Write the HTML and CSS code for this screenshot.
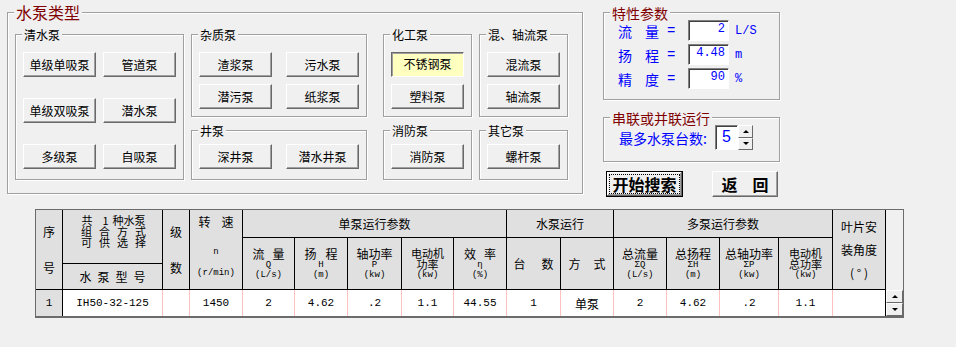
FILE: index.html
```html
<!DOCTYPE html>
<html lang="zh-CN">
<head>
    <meta charset="UTF-8">
    <title>水泵选型</title>
    <link rel="stylesheet" href="styles.css">
</head>
<body>

    <div class="top">
        <!-- 水泵类型 -->
        <div class="group main">
            <div class="title">水泵类型</div>
            <div class="cols">
                <div class="group g-clear">
                    <div class="title">清水泵</div>
                    <div class="btns two wide-rows">
                        <button>单级单吸泵</button>
                        <button>管道泵</button>
                        <button>单级双吸泵</button>
                        <button>潜水泵</button>
                        <button>多级泵</button>
                        <button>自吸泵</button>
                    </div>
                </div>

                <div class="col">
                    <div class="group g-big">
                        <div class="title">杂质泵</div>
                        <div class="btns two far">
                            <button>渣浆泵</button>
                            <button>污水泵</button>
                            <button>潜污泵</button>
                            <button>纸浆泵</button>
                        </div>
                    </div>
                    <div class="group g-big g-low">
                        <div class="title">井泵</div>
                        <div class="btns two far">
                            <button>深井泵</button>
                            <button>潜水井泵</button>
                        </div>
                    </div>
                </div>

                <div class="col col-gap">
                    <div class="group g-small">
                        <div class="title">化工泵</div>
                        <div class="btns">
                            <button class="on">不锈钢泵</button>
                            <button>塑料泵</button>
                        </div>
                    </div>
                    <div class="group g-small g-low">
                        <div class="title">消防泵</div>
                        <div class="btns">
                            <button>消防泵</button>
                        </div>
                    </div>
                </div>

                <div class="col">
                    <div class="group g-small">
                        <div class="title">混、轴流泵</div>
                        <div class="btns">
                            <button>混流泵</button>
                            <button>轴流泵</button>
                        </div>
                    </div>
                    <div class="group g-small g-low">
                        <div class="title">其它泵</div>
                        <div class="btns">
                            <button>螺杆泵</button>
                        </div>
                    </div>
                </div>
            </div>
        </div>

        <!-- 右侧参数 -->
        <div class="side">
            <div class="group params">
                <div class="title">特性参数</div>
                <div class="row">
                    <span class="lbl">流量</span><span class="eq">=</span>
                    <span class="field">2</span><span class="unit">L/S</span>
                </div>
                <div class="row">
                    <span class="lbl">扬程</span><span class="eq">=</span>
                    <span class="field">4.48</span><span class="unit">m</span>
                </div>
                <div class="row">
                    <span class="lbl">精度</span><span class="eq">=</span>
                    <span class="field">90</span><span class="unit">%</span>
                </div>
            </div>

            <div class="group series">
                <div class="title">串联或并联运行</div>
                <div class="spin-row">
                    <span class="spin-lbl">最多水泵台数:</span>
                    <span class="spin-box">5</span>
                    <span class="spin-btns">
                        <span class="arrow up"></span>
                        <span class="arrow down"></span>
                    </span>
                </div>
            </div>

            <div class="actions">
                <button class="act default"><span>开始搜索</span></button>
                <button class="act back"><span>返</span><span class="sp">回</span></button>
            </div>
        </div>
    </div>

    <!-- 结果表格 -->
    <div class="grid">
        <div class="h rs3 two-line"><span>序</span><span>号</span></div>
        <div class="h rs2 combo"><span>共<i class="num">1</i>种水泵</span><span class="sp6">组合方式</span><span class="sp6">可供选择</span></div>
        <div class="h rs3 two-line"><span>级</span><span>数</span></div>
        <div class="h rs3 speed"><span class="cn sp11">转速</span><span class="en l2">n</span><span class="en l3">(r/min)</span></div>
        <div class="h cs5"><span class="cn">单泵运行参数</span></div>
        <div class="h cs2"><span class="cn">水泵运行</span></div>
        <div class="h cs4"><span class="cn">多泵运行参数</span></div>
        <div class="h rs3 blade"><span>叶片安</span><span>装角度</span><span>( ° )</span></div>
        <div class="blank rs3"></div>

        <div class="h rs2"><span class="cn sp8">流量</span><span class="en">Q</span><span class="en">(L/s)</span></div>
        <div class="h rs2"><span class="cn sp9">扬程</span><span class="en">H</span><span class="en">(m)</span></div>
        <div class="h rs2"><span class="cn">轴功率</span><span class="en">P</span><span class="en">(kw)</span></div>
        <div class="h rs2"><span class="cn tight">电动机</span><span class="cn tight">功率</span><span class="en">(kw)</span></div>
        <div class="h rs2"><span class="cn sp8">效率</span><span class="en">η</span><span class="en">(%)</span></div>
        <div class="h rs2"><span class="cn sp16">台数</span></div>
        <div class="h rs2"><span class="cn sp13">方式</span></div>
        <div class="h rs2"><span class="cn">总流量</span><span class="en">ΣQ</span><span class="en">(L/s)</span></div>
        <div class="h rs2"><span class="cn">总扬程</span><span class="en">ΣH</span><span class="en">(m)</span></div>
        <div class="h rs2"><span class="cn">总轴功率</span><span class="en">ΣP</span><span class="en">(kw)</span></div>
        <div class="h rs2"><span class="cn tight">电动机</span><span class="cn tight">总功率</span><span class="en">(kw)</span></div>
        <div class="h model"><span class="cn sp6">水泵型号</span></div>

        <div class="d idx">1</div>
        <div class="d">IH50-32-125</div>
        <div class="d"></div>
        <div class="d">1450</div>
        <div class="d">2</div>
        <div class="d">4.62</div>
        <div class="d">.2</div>
        <div class="d">1.1</div>
        <div class="d">44.55</div>
        <div class="d">1</div>
        <div class="d cn-cell">单泵</div>
        <div class="d">2</div>
        <div class="d">4.62</div>
        <div class="d">.2</div>
        <div class="d">1.1</div>
        <div class="d last"></div>
        <div class="scroll">
            <span class="arrow up"></span>
            <span class="arrow down"></span>
        </div>
    </div>

</body>
</html>
```

FILE: styles.css
```css
/* 基本 */
body {
    margin: 0;
    background-color: #f0f0f0;
    color: #000;
    font: 12px "Noto Sans CJK SC", sans-serif;
}

button {
    font: 12px "Noto Sans CJK SC", sans-serif;
    color: #000;
    padding: 0;
}

.top {
    display: flex;
    align-items: flex-start;
    padding: 12px 0 0 7px;
}

/* 分组框 */
.group {
    box-sizing: border-box;
    border: 1px solid #a0a0a0;
    box-shadow: 1px 1px 0 #fff, inset 1px 1px 0 #fff;
}

.title {
    width: max-content;
    height: 14px;
    line-height: 14px;
    margin: -7px 0 0 6px;
    padding: 0 2px;
    background-color: #f0f0f0;
}

.main {
    width: 576px;
    height: 182px;
}

.main > .title {
    height: 18px;
    line-height: 18px;
    margin-top: -10px;
    font-size: 16px;
    color: #800000;
}

.cols {
    display: flex;
    gap: 7px;
    margin-top: 13px;
    padding-left: 7px;
}

.col {
    display: flex;
    flex-direction: column;
    gap: 13px;
}

.col-gap {
    margin-left: 9px;
}

.g-clear {
    width: 169px;
    height: 146px;
}

.g-big {
    width: 176px;
    height: 83px;
}

.g-small {
    width: 89px;
    height: 83px;
}

.g-low {
    height: 50px;
}

/* 按钮 */
.btns {
    display: grid;
    grid-template-columns: 73px;
    grid-auto-rows: 25px;
    row-gap: 7px;
    margin-top: 10px;
    padding-left: 7px;
}

.g-low .btns {
    margin-top: 6px;
}

.btns.two {
    grid-template-columns: 73px 73px;
    column-gap: 7px;
}

.btns.far {
    column-gap: 14px;
}

.btns.wide-rows {
    row-gap: 21px;
}

.btns button {
    background-color: #f0f0f0;
    border: 1px solid;
    border-color: #fff #696969 #696969 #fff;
    box-shadow: inset -1px -1px 0 #a0a0a0;
    line-height: 22px;
}

.btns button.on {
    background-color: #ffffc0;
    border-color: #696969 #fff #fff #696969;
    box-shadow: inset 1px 1px 0 #a0a0a0;
    padding-bottom: 4px;
}

/* 右侧 */
.side {
    width: 177px;
    margin-left: 20px;
    display: flex;
    flex-direction: column;
}

.side .title {
    font-size: 14px;
    color: #800000;
}

.params {
    height: 88px;
}

.row {
    display: flex;
    align-items: center;
    height: 21px;
    margin-bottom: 3px;
    padding-left: 14px;
    color: #0000ff;
    font-size: 14px;
}

.lbl {
    width: 41px;
    text-align: justify;
    text-align-last: justify;
}

.eq {
    width: 8px;
    margin-left: 8px;
    font-family: "Liberation Mono", monospace;
}

.field {
    box-sizing: border-box;
    width: 41px;
    height: 21px;
    margin-left: 13px;
    padding-right: 3px;
    background-color: #fff;
    border: 1px solid;
    border-color: #808080 #fff #fff #808080;
    box-shadow: inset 1px 1px 0 #404040;
    text-align: right;
    font: 12px/17px "Liberation Mono", monospace;
}

.unit {
    margin-left: 6px;
    font: 12px "Liberation Mono", monospace;
}

.series {
    height: 45px;
    margin-top: 17px;
}

.spin-row {
    display: flex;
    align-items: center;
    height: 25px;
    padding-left: 15px;
    color: #0000ff;
    font-size: 14px;
}

.spin-lbl {
    width: 96px;
}

.spin-box {
    box-sizing: border-box;
    width: 23px;
    height: 25px;
    background-color: #fff;
    border: 1px solid;
    border-color: #808080 #fff #fff #808080;
    box-shadow: inset 1px 1px 0 #404040;
    text-align: center;
    font: 16px/22px "Liberation Sans", sans-serif;
}

.spin-btns,
.scroll {
    display: flex;
    flex-direction: column;
    width: 15px;
    height: 25px;
}

.arrow {
    flex: 1;
    display: flex;
    align-items: center;
    justify-content: center;
    background-color: #f0f0f0;
    border: 1px solid;
    border-color: #fff #696969 #696969 #fff;
    box-sizing: border-box;
}

.arrow::after {
    content: "";
    border-left: 3px solid transparent;
    border-right: 3px solid transparent;
}

.arrow.up::after {
    border-bottom: 3px solid #000;
}

.arrow.down::after {
    border-top: 3px solid #000;
}

.actions {
    display: flex;
    margin-top: 9px;
    padding-left: 3px;
}

.act {
    box-sizing: border-box;
    height: 26px;
    background-color: #f0f0f0;
    border: 1px solid;
    border-color: #fff #696969 #696969 #fff;
    box-shadow: inset -1px -1px 0 #a0a0a0;
    font-size: 16px;
    font-weight: bold;
    line-height: 20px;
}

.act.default {
    width: 77px;
    border: 1px solid #000;
    box-shadow: inset -1px -1px 0 #696969, inset 1px 1px 0 #fff, inset -2px -2px 0 #a0a0a0;
    outline: 1px dotted #000;
    outline-offset: -4px;
}

.act.back {
    width: 66px;
    margin-left: 29px;
}

.act .sp {
    margin-left: 15px;
}

/* 表格 */
.grid {
    display: grid;
    box-sizing: border-box;
    width: 869px;
    margin: 12px 0 0 35px;
    border: 1px solid #6b6b6b;
    border-bottom-width: 2px;
    grid-template-columns: 27px 100px 27px 53px 52px 53px 54px 52px 53px 54px 53px 53px 53px 59px 54px 53px 17px;
    grid-template-rows: 28px 26px 26px 26px;
    background-color: #f0f0f0;
}

.rs2 { grid-row: span 2; }
.rs3 { grid-row: span 3; }
.cs2 { grid-column: span 2; }
.cs4 { grid-column: span 4; }
.cs5 { grid-column: span 5; }

.h {
    display: flex;
    flex-direction: column;
    align-items: center;
    justify-content: center;
    background-color: #e0e0e0;
    border-right: 1px solid #000;
    border-bottom: 1px solid #000;
    white-space: pre;
}

.h span {
    display: block;
}

.h .cn {
    line-height: 12px;
}

.h .cn.tight {
    font-size: 11px;
    line-height: 11px;
}

.h .en {
    font: 9px/10px "Liberation Mono", monospace;
}

.sp6 { letter-spacing: 6px; margin-right: -6px; }
.sp8 { letter-spacing: 8px; margin-right: -8px; }
.sp9 { letter-spacing: 9px; margin-right: -9px; }
.sp11 { letter-spacing: 11px; margin-right: -11px; }
.sp13 { letter-spacing: 13px; margin-right: -13px; }
.sp16 { letter-spacing: 16px; margin-right: -16px; }

.two-line span {
    line-height: 36px;
}

.combo {
    padding: 0 0 10px 2px;
}

.combo span {
    font-size: 11px;
    line-height: 11px;
}

.combo .sp6 {
    letter-spacing: 7px;
    margin-right: -7px;
}

.combo .num {
    font-style: normal;
    margin: 0 4px 0 10px;
}

.model {
    grid-column: 2;
    grid-row: 3;
}

.speed {
    justify-content: flex-start;
}

.speed .cn {
    margin-top: 5px;
    line-height: 14px;
}

.speed .l2 {
    margin-top: 18px;
}

.speed .l3 {
    margin-top: 11px;
}

.blade span {
    line-height: 23px;
}

.blank {
    background-color: #f0f0f0;
}

.d {
    display: flex;
    align-items: center;
    justify-content: center;
    background-color: #fff;
    border-right: 1px solid #ffc0c0;
    font: 11px "Liberation Mono", monospace;
}

.d.idx {
    background-color: #e0e0e0;
    border-right-color: #000;
}

.d.last {
    border-right-color: #000;
}

.d.cn-cell {
    font: 12px "Noto Sans CJK SC", sans-serif;
}

.scroll {
    width: 17px;
    height: 26px;
}
```
